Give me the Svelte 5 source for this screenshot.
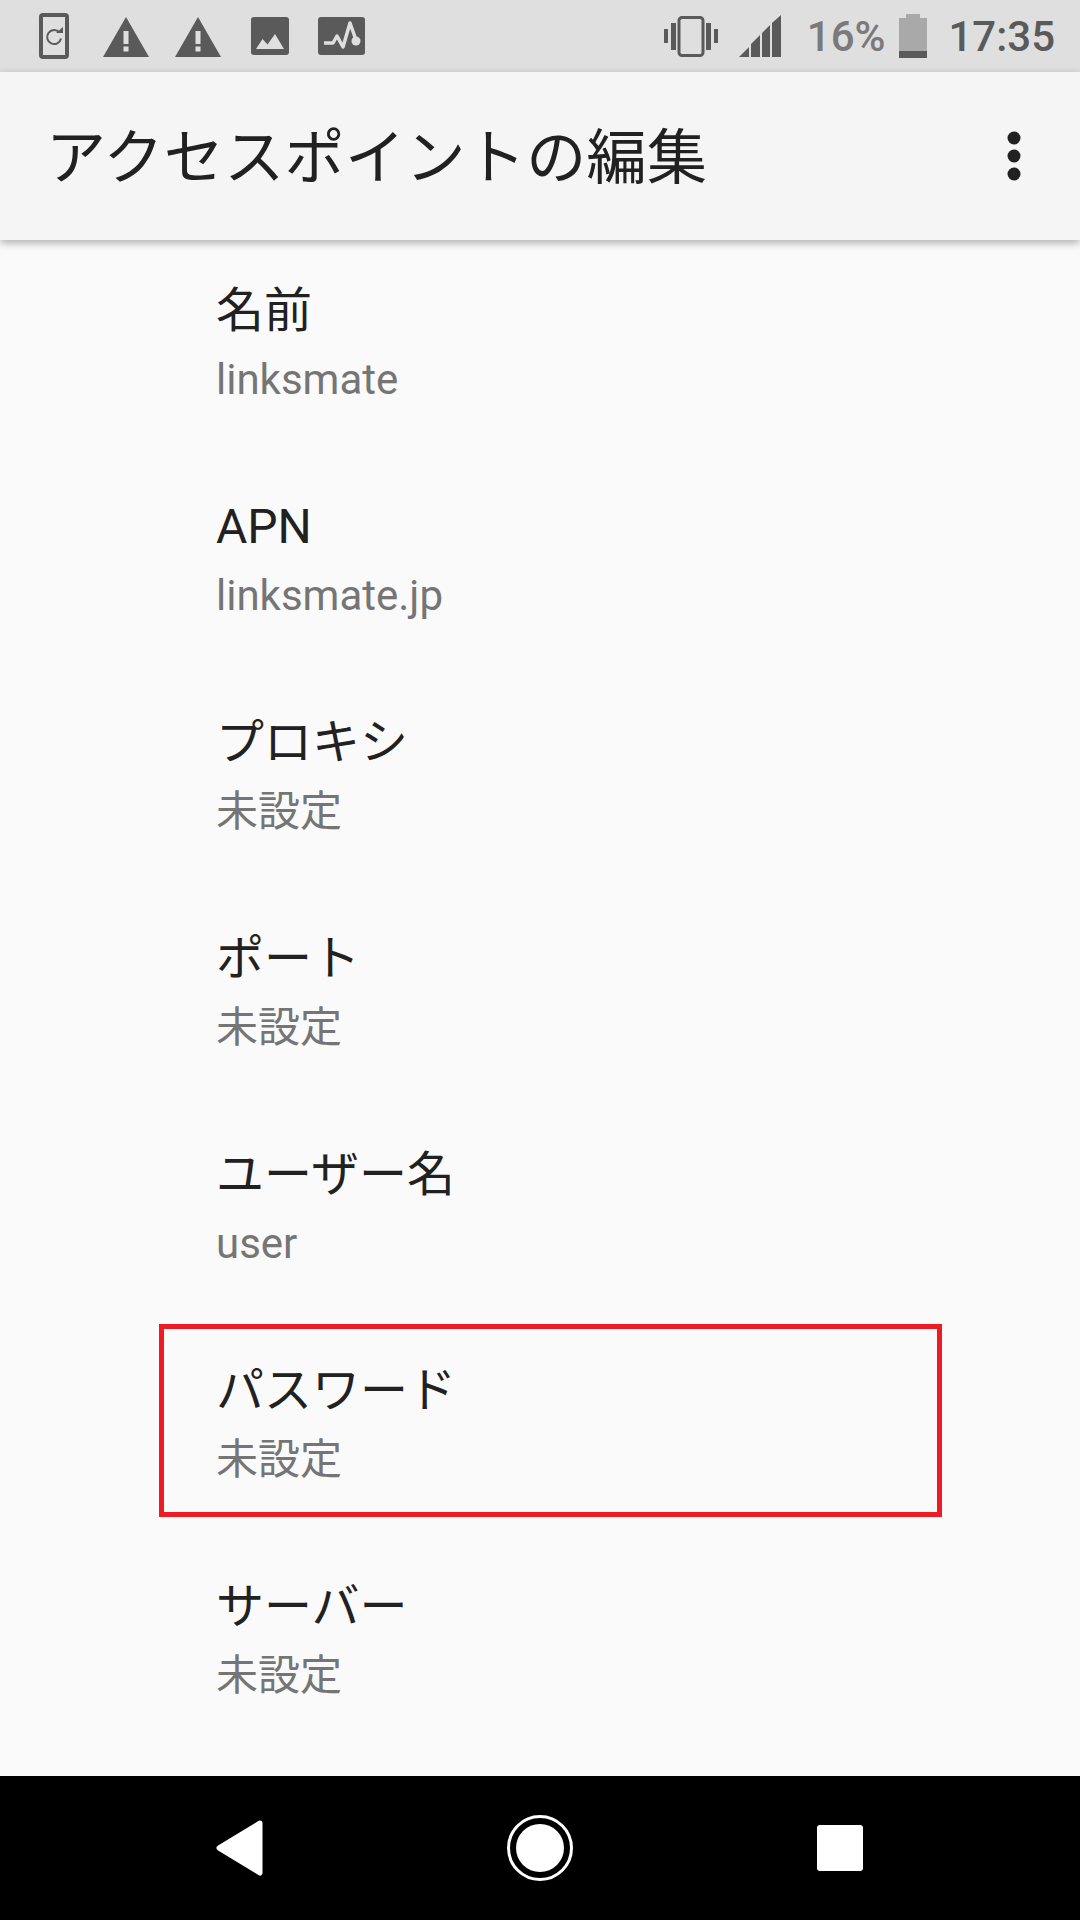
<script>
  const rows = [
    { label: '名前', value: 'linksmate' },
    { label: 'APN', value: 'linksmate.jp' },
    { label: 'プロキシ', value: '未設定' },
    { label: 'ポート', value: '未設定' },
    { label: 'ユーザー名', value: 'user' },
    { label: 'パスワード', value: '未設定', marked: true },
    { label: 'サーバー', value: '未設定' }
  ];
</script>

<div class="screen">
  <div class="status">
    <div class="status-left">
      <svg class="i-phone" width="30" height="46" viewBox="0 0 30 46">
        <rect x="2" y="2" width="26" height="42" rx="2" fill="none" stroke="#5a5a5a" stroke-width="4" />
        <path d="M20.500 19.500a7 7 0 1 0 1.500 6" fill="none" stroke="#5a5a5a" stroke-width="2" />
        <path d="M17 20h7v-6z" fill="#5a5a5a" />
      </svg>
      <svg class="i-warn" width="46" height="40" viewBox="0 0 46 40">
        <path d="M23 0L46 40H0z" fill="#5a5a5a" />
        <path d="M20.500 14h5v13h-5zM20.500 29.500h5v5h-5z" fill="#dfdfdf" />
      </svg>
      <svg class="i-warn second" width="46" height="40" viewBox="0 0 46 40">
        <path d="M23 0L46 40H0z" fill="#5a5a5a" />
        <path d="M20.500 14h5v13h-5zM20.500 29.500h5v5h-5z" fill="#dfdfdf" />
      </svg>
      <svg class="i-image" width="38" height="38" viewBox="0 0 38 38">
        <rect width="38" height="38" rx="3" fill="#5a5a5a" />
        <path d="M5 32l6.500-10 5 5.500 7.500-10.500 9 15z" fill="#dfdfdf" />
      </svg>
      <svg class="i-pulse" width="47" height="38" viewBox="0 0 47 38">
        <rect width="47" height="38" rx="3" fill="#5a5a5a" />
        <path d="M6 26h9l4-7 6 11 7-24 6 17" fill="none" stroke="#dfdfdf" stroke-width="3.500" stroke-linejoin="round" />
        <circle cx="38" cy="24" r="4.500" fill="#dfdfdf" />
      </svg>
    </div>
    <div class="status-right">
      <svg class="i-vibrate" width="54" height="41" viewBox="0 0 54 41">
        <rect x="15" y="1.500" width="24" height="38" rx="3" fill="none" stroke="#5a5a5a" stroke-width="3" />
        <path d="M7 7h5v27H7zM42 7h5v27h-5zM0 13h4v14H0zM50 13h4v14h-4z" fill="#5a5a5a" />
      </svg>
      <svg class="i-signal" width="42" height="42" viewBox="0 0 42 42">
        <path d="M0 42L10 32v10zM12 42V29l9-9v22zM23 42V18l8-8v32zM33 42V8l9-8v42z" fill="#5a5a5a" />
      </svg>
      <span class="percent">16%</span>
      <svg class="i-battery" width="28" height="44" viewBox="0 0 28 44">
        <path d="M7 0h14v4h7v40H0V4h7z" fill="#a9a9a9" />
        <rect y="37" width="28" height="7" fill="#5a5a5a" />
      </svg>
      <span class="time">17:35</span>
    </div>
  </div>

  <header class="toolbar">
    <h1>アクセスポイントの編集</h1>
    <svg class="overflow" width="14" height="50" viewBox="0 0 14 50">
      <circle cx="7" cy="7" r="6.500" fill="#212121" />
      <circle cx="7" cy="25" r="6.500" fill="#212121" />
      <circle cx="7" cy="43" r="6.500" fill="#212121" />
    </svg>
  </header>

  <main class="list">
    {#each rows as row}
      <div class="row">
        <div class="label">{row.label}</div>
        <div class="value">{row.value}</div>
        {#if row.marked}
          <div class="mark"></div>
        {/if}
      </div>
    {/each}
  </main>

  <nav class="nav">
    <div class="nav-item">
      <svg width="48" height="56" viewBox="0 0 48 56">
        <path d="M44 3L3 28l41 25z" fill="#fff" stroke="#fff" stroke-width="5" stroke-linejoin="round" />
      </svg>
    </div>
    <div class="nav-item">
      <svg width="66" height="66" viewBox="0 0 66 66">
        <circle cx="33" cy="33" r="31.500" fill="none" stroke="#fff" stroke-width="3" />
        <circle cx="33" cy="33" r="24" fill="#fff" />
      </svg>
    </div>
    <div class="nav-item">
      <div class="recents"></div>
    </div>
  </nav>
</div>

<style>
  :global(body) {
    margin: 0;
    background: #fafafa;
  }

  .screen {
    width: 1080px;
    height: 1920px;
    display: flex;
    flex-direction: column;
    overflow: hidden;
    font-family: Roboto, "Noto Sans CJK JP", sans-serif;
  }

  .status {
    height: 72px;
    flex: none;
    background: #dfdfdf;
    display: flex;
    align-items: center;
    justify-content: space-between;
    padding: 0 25px 0 39px;
    box-sizing: border-box;
  }

  .status-left,
  .status-right {
    display: flex;
    align-items: center;
  }

  .i-warn {
    margin-left: 34px;
    margin-top: 2px;
  }

  .i-warn.second {
    margin-left: 26px;
  }

  .i-image {
    margin-left: 30px;
  }

  .i-pulse {
    margin-left: 29px;
  }

  .i-signal {
    margin-left: 21px;
  }

  .percent {
    margin-left: 26px;
    font-size: 42px;
    font-weight: 500;
    color: #7a7a7a;
  }

  .i-battery {
    margin-left: 14px;
  }

  .time {
    margin-left: 21px;
    font-size: 42px;
    font-weight: 500;
    color: #5a5a5a;
  }

  .toolbar {
    height: 168px;
    flex: none;
    background: #f5f5f5;
    display: flex;
    align-items: center;
    justify-content: space-between;
    padding: 0 59px 0 46px;
    box-sizing: border-box;
    box-shadow: 0 3px 8px rgba(0, 0, 0, 0.3);
    position: relative;
    z-index: 1;
  }

  h1 {
    margin: 0;
    padding-top: 5px;
    font-size: 60px;
    font-weight: 400;
    letter-spacing: 0.4px;
    color: #212121;
    line-height: 80px;
  }

  .list {
    flex: 1;
    background: #fafafa;
    margin-top: -3px;
    overflow: hidden;
  }

  .row {
    height: 216px;
    padding-left: 216px;
    display: flex;
    flex-direction: column;
    justify-content: center;
    position: relative;
  }

  .label {
    font-size: 48px;
    line-height: 68px;
    color: #212121;
  }

  .value {
    margin-top: 1px;
    font-size: 42px;
    line-height: 68px;
    color: #757575;
  }

  .mark {
    position: absolute;
    left: 159px;
    right: 138px;
    top: 7px;
    height: 193px;
    box-sizing: border-box;
    border: 5px solid #ed1c24;
  }

  .nav {
    height: 144px;
    flex: none;
    background: #000;
    display: flex;
    justify-content: center;
  }

  .nav-item {
    width: 300px;
    display: flex;
    align-items: center;
    justify-content: center;
  }

  .recents {
    width: 46px;
    height: 46px;
    background: #fff;
    border-radius: 3px;
  }
</style>
